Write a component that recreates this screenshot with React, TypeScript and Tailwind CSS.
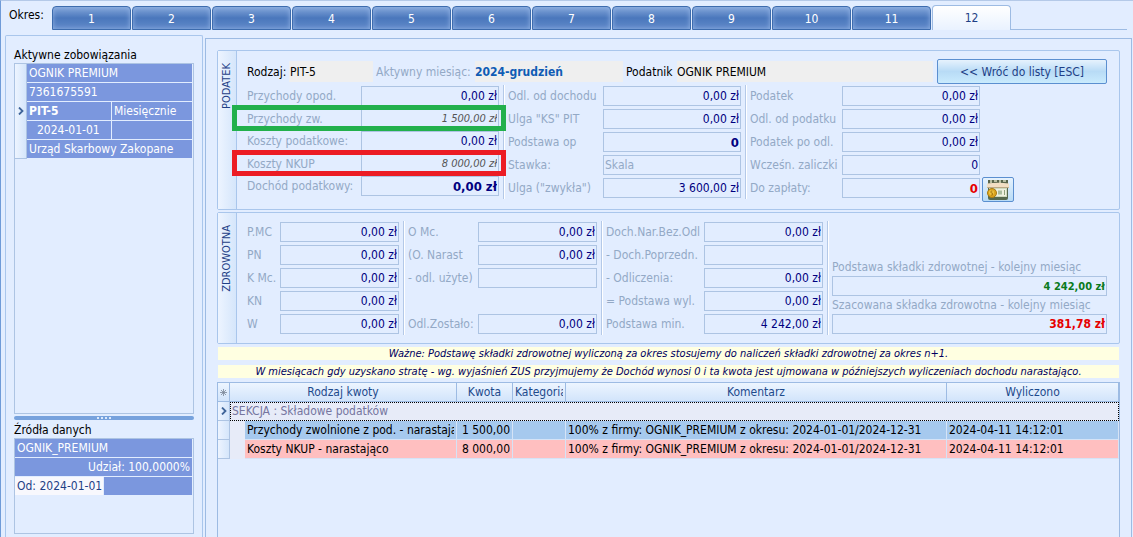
import { useId, useState } from "react";
import clsx from "clsx";

type FieldData = {
  label: string;
  value?: string;
  tone?: string;
  mark?: string;
  // label without a box next to it
  empty?: boolean;
};

const months = ["1", "2", "3", "4", "5", "6", "7", "8", "9", "10", "11", "12"];

const income: FieldData[] = [
  { label: "Przychody opod.", value: "0,00 zł" },
  { label: "Przychody zw.", value: "1 500,00 zł", tone: "text-[11px] italic text-[#555]", mark: "border-[#22b04c]" },
  { label: "Koszty podatkowe:", value: "0,00 zł" },
  { label: "Koszty NKUP", value: "8 000,00 zł", tone: "text-[11px] italic text-[#555]", mark: "border-[#ec1c24]" },
  { label: "Dochód podatkowy:", value: "0,00 zł", tone: "text-[13px] font-bold text-[#000080]" }
];

const deductions: FieldData[] = [
  { label: "Odl. od dochodu", value: "0,00 zł" },
  { label: "Ulga \"KS\" PIT", value: "0,00 zł" },
  { label: "Podstawa op", value: "0", tone: "text-[13px] font-bold text-[#000080]" },
  { label: "Stawka:", value: "Skala", tone: "text-left text-[#93a9c6]" },
  { label: "Ulga (\"zwykła\")", value: "3 600,00 zł" }
];

const tax: FieldData[] = [
  { label: "Podatek", value: "0,00 zł" },
  { label: "Odl. od podatku", value: "0,00 zł" },
  { label: "Podatek po odl.", value: "0,00 zł" },
  { label: "Wcześn. zaliczki", value: "0" },
  { label: "Do zapłaty:", value: "0", tone: "text-[13px] font-bold text-[#e60000]" }
];

const healthBase: FieldData[] = [
  { label: "P.MC", value: "0,00 zł" },
  { label: "PN", value: "0,00 zł" },
  { label: "K Mc.", value: "0,00 zł" },
  { label: "KN", value: "0,00 zł" },
  { label: "W", value: "0,00 zł" }
];

const healthDeductions: FieldData[] = [
  { label: "O Mc.", value: "0,00 zł" },
  { label: "(O. Narast", value: "0,00 zł" },
  { label: "- odl. użyte)", value: "" },
  { label: "", empty: true },
  { label: "Odl.Zostało:", value: "0,00 zł" }
];

const healthIncome: FieldData[] = [
  { label: "Doch.Nar.Bez.Odl", value: "0,00 zł" },
  { label: "- Doch.Poprzedn.", value: "" },
  { label: "- Odliczenia:", value: "0,00 zł" },
  { label: "= Podstawa wyl.", value: "0,00 zł" },
  { label: "Podstawa min.", value: "4 242,00 zł" }
];

const entries = [
  { name: "Przychody zwolnione z pod. - narastająco", amount: "1 500,00", color: "bg-[#a6c9ee]" },
  { name: "Koszty NKUP - narastająco", amount: "8 000,00", color: "bg-[#ffbfc0]" }
];

function Field({ item, labelWidth, width }: { item: FieldData; labelWidth: string; width: string }) {
  const id = useId();

  if (item.empty) {
    return <div className="h-5" />;
  }

  return (
    <div className="relative flex h-5 items-center">
      <label htmlFor={id} className={clsx("shrink-0 whitespace-nowrap text-[#93a9c6]", labelWidth)}>
        {item.label}
      </label>
      <input
        id={id}
        readOnly
        value={item.value}
        className={clsx(
          "h-5 border border-[#adc4e3] bg-transparent px-px outline-none",
          width,
          item.tone ?? "text-[#000080]",
          item.label !== "Stawka:" && "text-right"
        )}
      />
      {item.mark ? <div className={clsx("pointer-events-none absolute -top-1 -right-[7px] -bottom-0.5 -left-[15px] border-5", item.mark)} /> : null}
    </div>
  );
}

function FieldColumn({ items, labelWidth, width, height = "h-28" }: { items: FieldData[]; labelWidth: string; width: string; height?: string }) {
  return (
    <div className={clsx("flex shrink-0 flex-col justify-between", height)}>
      {items.map((item, index) => (
        <Field key={index} item={item} labelWidth={labelWidth} width={width} />
      ))}
    </div>
  );
}

function Divider() {
  return <div className="-my-px mr-[3px] ml-1 w-0.5 shrink-0 self-stretch border-r border-l border-l-[#b4c9e8] border-r-white" />;
}

function Group({ title, children }: { title: string; children: React.ReactNode }) {
  return (
    <section className="flex rounded-xs border border-[#a9c6ec]">
      <h2 className="w-[19px] shrink-0 border-r border-[#a9c6ec] bg-linear-to-r from-[#edf4ff] to-[#d5e6fb] pt-3 text-[11px] text-[#1e3f86]">
        <span className="block rotate-180 leading-[18px] [writing-mode:vertical-rl]">{title}</span>
      </h2>
      <div className="min-w-0 flex-1 pl-[10px]">{children}</div>
    </section>
  );
}

function PaymentIcon() {
  return (
    <svg width="24" height="22" viewBox="0 0 24 22" aria-hidden="true">
      <path d="M2 6h20v13q0 2-2 2H4q-2 0-2-2z" fill="#55694f" />
      <path d="M2 1h20v5H2z" fill="#59654c" />
      <path d="M4 1h2v3H4zM8 1h3v2H8zM13 1h2v3h-2zM17 1h3v2h-3z" fill="#b9bfa4" />
      <path d="M1 4.500q11-1.500 22 0V8.500H1z" fill="#f2dfc4" />
      <path d="M1 8.500h22" stroke="#c3ab86" strokeWidth="0.8" />
      <path d="M3 9h18v9H3z" fill="#cfdac0" />
      <path d="M10 10h10v7H10z" fill="#eef1e0" />
      <path d="M12 11.500h4v4h-4z" fill="#a9bda0" />
      <path d="M18.500 11v5" stroke="#8fa27d" />
      <circle cx="6" cy="14" r="4.500" fill="#dba520" stroke="#a87a12" />
      <circle cx="5.500" cy="13.500" r="2.500" fill="#f0c540" />
      <path d="M6.500 12H5v2h1.500v2H5" fill="none" stroke="#9a6c08" strokeWidth="0.7" />
    </svg>
  );
}

function Sidebar() {
  const cell = "h-[18px] overflow-hidden whitespace-nowrap px-0.5 leading-[18px]";

  return (
    <aside className="flex w-[198px] shrink-0 flex-col rounded-t-xs border border-b-0 border-[#a9c6ec] px-2 pt-2.5 pb-0.5">
      <h2 className="h-[17px] leading-[18px]">Aktywne zobowiązania</h2>
      <div className="flex h-[351px] items-start border border-[#adc4e3]">
        <div className="flex h-[95px] w-3 shrink-0 items-center justify-center border-r border-b border-[#adc4e3] bg-linear-to-r from-[#edf4ff] to-[#d5e6fb]">
          <Marker />
        </div>
        <div className="mr-px grid flex-1 grid-cols-[84px_1fr] gap-px text-white *:bg-[#7b97de]">
          <div className={clsx(cell, "col-span-2")}>OGNIK PREMIUM</div>
          <div className={clsx(cell, "col-span-2")}>7361675591</div>
          <div className={clsx(cell, "font-bold")}>PIT-5</div>
          <div className={cell}>Miesięcznie</div>
          <div className={clsx(cell, "pl-2.5")}>2024-01-01</div>
          <div className={cell} />
          <div className={clsx(cell, "col-span-2")}>Urząd Skarbowy Zakopane</div>
        </div>
      </div>
      <div className="mt-0.5 flex h-1 items-center justify-center gap-0.5 rounded-xs bg-[#77a2dd] *:size-0.5 *:bg-[#dbe9fc]">
        <span />
        <span />
        <span />
        <span />
      </div>
      <h2 className="mt-px h-[17px] leading-[18px]">Źródła danych</h2>
      <div className="h-24 border border-[#adc4e3]">
        <div className="mr-px grid grid-cols-[88px_1fr] gap-px text-white">
          <div className={clsx(cell, "col-span-2 bg-[#7b97de]")}>OGNIK_PREMIUM</div>
          <div className={clsx(cell, "col-span-2 bg-[#7b97de] text-right")}>Udział: 100,0000%</div>
          <div className={clsx(cell, "bg-[#f8f8fd] text-[#1e3f86]")}>Od: 2024-01-01</div>
          <div className={clsx(cell, "bg-[#7b97de]")} />
        </div>
      </div>
    </aside>
  );
}

function Marker() {
  return (
    <svg width="6" height="8" viewBox="0 0 6 8" aria-hidden="true">
      <path d="M1 0.5l3.5 3.5L1 7.5" fill="none" stroke="#3f6499" strokeWidth="1.8" />
    </svg>
  );
}

function EntriesTable() {
  const head = "h-[19px] overflow-hidden border-r border-b border-[#9dbbe3] bg-linear-to-b from-[#edf5ff] to-[#d2e4fb] p-0 text-center font-normal text-[#1e4a8c]";
  const stub = "h-[19px] border-r border-b border-[#adc4e3] bg-linear-to-r from-[#edf4ff] to-[#d5e6fb] p-0";
  const cell = "overflow-hidden whitespace-nowrap border-r border-b border-[#d5e3f6] px-0.5 py-0";

  return (
    <div className="mt-1 flex-1 border border-b-0 border-[#9dbbe3]">
      <table className="w-full table-fixed border-separate border-spacing-0 leading-[18px]">
        <colgroup>
          <col className="w-3" />
          <col className="w-[15px]" />
          <col className="w-[212px]" />
          <col className="w-14" />
          <col className="w-[53px]" />
          <col />
          <col className="w-[172px]" />
        </colgroup>
        <thead>
          <tr>
            <th className={head}>
              <svg className="mx-auto" width="7" height="7" viewBox="0 0 7 7" aria-hidden="true">
                <path d="M3.5 0v7M0 3.5h7M1 1l5 5M6 1L1 6" stroke="#7b8797" strokeWidth="0.8" />
              </svg>
            </th>
            <th className={head} colSpan={2}>Rodzaj kwoty</th>
            <th className={head}>Kwota</th>
            <th className={clsx(head, "px-0.5 text-left")}>
              <div className="overflow-hidden">Kategoria</div>
            </th>
            <th className={head}>Komentarz</th>
            <th className={head}>Wyliczono</th>
          </tr>
        </thead>
        <tbody>
          <tr>
            <td className={stub}>
              <div className="flex justify-center">
                <Marker />
              </div>
            </td>
            <td colSpan={6} className="border border-dotted border-black bg-[#e7ebf8] px-px py-0 leading-[17px] text-[#75759f]">
              SEKCJA : Składowe podatków
            </td>
          </tr>
          {entries.map((entry) => (
            <tr key={entry.name}>
              <td className={stub} />
              <td className="bg-[#e7ebf8] p-0" />
              <td className={clsx(cell, entry.color)}>
                <div className="overflow-hidden">{entry.name}</div>
              </td>
              <td className={clsx(cell, entry.color, "text-right")}>{entry.amount}</td>
              <td className={clsx(cell, entry.color)} />
              <td className={clsx(cell, entry.color)}>100% z firmy: OGNIK_PREMIUM z okresu: 2024-01-01/2024-12-31</td>
              <td className={clsx(cell, entry.color)}>2024-04-11 14:12:01</td>
            </tr>
          ))}
        </tbody>
      </table>
    </div>
  );
}

export default function App() {
  const [month, setMonth] = useState("12");

  return (
    <div className="flex min-h-screen flex-col border-t border-l border-t-[#b4c9e8] border-l-[#6f9bd8] bg-[#e2edff] pl-1 font-['DejaVu_Sans_Condensed','DejaVu_Sans',sans-serif] text-[12px] leading-4 text-black">
      <header className="flex h-[29px] items-end pl-1">
        <span className="mb-[7px] w-[43px] shrink-0">Okres:</span>
        <nav className="flex shrink-0 items-end gap-px" role="tablist">
          {months.map((item) => (
            <button
              key={item}
              type="button"
              role="tab"
              aria-selected={item === month}
              onClick={() => setMonth(item)}
              className={clsx(
                "w-[79px] rounded-t-sm border",
                item === month
                  ? "h-[25px] border-b-0 border-[#9dbbe3] bg-linear-to-b from-white to-[#e9f2ff] text-[#1e3f86]"
                  : "h-6 border-[#3d6cae] bg-linear-to-b from-[#84a6da] via-[#4a77bc] to-[#6089c9] pt-0.5 text-white shadow-[inset_0_0_5px_#8fb0e2]"
              )}
            >
              {item}
            </button>
          ))}
        </nav>
        <div className="mr-1.5 flex-1 border-b border-[#9dbbe3]" />
      </header>

      <div className="flex flex-1 gap-0.5 pt-[5px] pr-px">
        <Sidebar />

        <main className="mt-[3px] flex min-w-0 flex-1 flex-col border border-b-0 border-[#9dbbe3] px-[11px] pt-[11px]">
          <Group title="PODATEK">
            <div className="flex items-center pt-2 pr-3">
              <label htmlFor="kind" className="w-[42px] shrink-0">Rodzaj:</label>
              <input id="kind" readOnly value="PIT-5" className="h-[21px] w-[84px] bg-[#efefef] px-px outline-none" />
              <label htmlFor="active-month" className="ml-[3px] w-[99px] shrink-0 whitespace-nowrap text-[#93a9c6]">Aktywny miesiąc:</label>
              <input id="active-month" readOnly value="2024-grudzień" className="h-[21px] w-[148px] bg-[#efefef] font-bold text-[#0f5cb5] outline-none" />
              <label htmlFor="payer" className="ml-[3px] w-[51px] shrink-0">Podatnik</label>
              <input id="payer" readOnly value="OGNIK PREMIUM" className="mr-1 h-[21px] min-w-0 flex-1 bg-[#efefef] outline-none" />
              <button type="button" className="h-[25px] w-[170px] shrink-0 rounded-xs border border-[#5b8fd0] bg-linear-to-b from-[#e6f2fd] via-[#b8dbf6] to-[#c9ebfd] text-[#1e3f86]">
                &lt;&lt; Wróć do listy [ESC]
              </button>
            </div>
            <div className="flex pt-0.5 pb-[11px]">
              <FieldColumn items={income} labelWidth="w-[114px]" width="w-[138px]" height="h-[110px]" />
              <Divider />
              <FieldColumn items={deductions} labelWidth="w-[95px]" width="w-[138px]" />
              <Divider />
              <FieldColumn items={tax} labelWidth="w-[92px]" width="w-[138px]" />
              <button type="button" aria-label="Zapłata" className="ml-0.5 -mb-1 flex h-[25px] w-8 items-center justify-center self-end rounded-xs border border-[#5b8fd0] bg-linear-to-b from-[#e6f2fd] to-[#b8dbf6]">
                <PaymentIcon />
              </button>
            </div>
          </Group>

          <div className="h-0.5" />

          <Group title="ZDROWOTNA">
            <div className="flex pt-[9px] pr-3 pb-[9px]">
              <FieldColumn items={healthBase} labelWidth="w-[33px]" width="w-[119px]" />
              <Divider />
              <FieldColumn items={healthDeductions} labelWidth="w-[70px]" width="w-[119px]" />
              <Divider />
              <FieldColumn items={healthIncome} labelWidth="w-[98px]" width="w-[119px]" />
              <Divider />
              <div className="flex min-w-0 flex-1 flex-col justify-end text-[#93a9c6]">
                <label htmlFor="next-base" className="h-[18px] truncate leading-[18px]">Podstawa składki zdrowotnej - kolejny miesiąc</label>
                <input id="next-base" readOnly value="4 242,00 zł" className="h-5 w-full border border-[#adc4e3] px-px text-right text-[11px] font-bold text-[#0a7a1c] outline-none" />
                <label htmlFor="next-contribution" className="h-[18px] truncate leading-[18px]">Szacowana składka zdrowotna - kolejny miesiąc</label>
                <input id="next-contribution" readOnly value="381,78 zł" className="h-5 w-full border border-[#adc4e3] px-px text-right font-bold text-[#e60000] outline-none" />
              </div>
            </div>
          </Group>

          <div className="mx-px mt-[3px] grid gap-[5px] text-center text-[11px] italic leading-[13px] text-[#000060] *:bg-[#ffffe1]">
            <p>Ważne: Podstawę składki zdrowotnej wyliczoną za okres stosujemy do naliczeń składki zdrowotnej za okres n+1.</p>
            <p>W miesiącach gdy uzyskano stratę - wg. wyjaśnień ZUS przyjmujemy że Dochód wynosi 0 i ta kwota jest ujmowana w późniejszych wyliczeniach dochodu narastająco.</p>
          </div>

          <EntriesTable />
        </main>
      </div>
    </div>
  );
}
